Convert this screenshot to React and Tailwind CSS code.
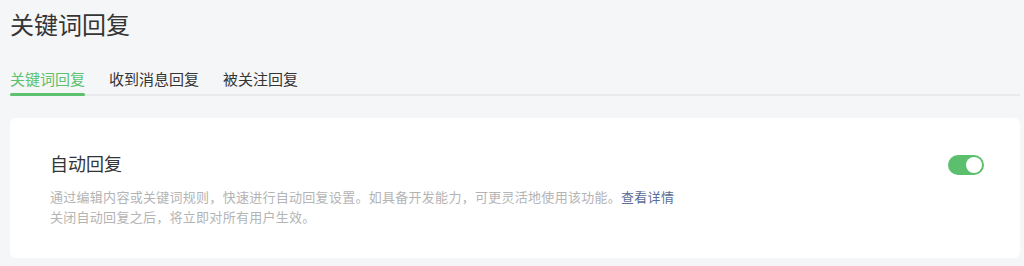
import React, { useState } from 'react';

export default function App() {
  const [tab, setTab] = useState('keyword');
  const [enabled, setEnabled] = useState(true);

  const tabs = [
    { id: 'keyword', label: '关键词回复' },
    { id: 'message', label: '收到消息回复' },
    { id: 'follow', label: '被关注回复' },
  ];

  return (
    <div
      className="min-h-screen bg-[#f5f6f7] pl-[10px] pr-[4px] pt-2 text-[#353535]"
      style={{ fontFamily: '"Noto Sans CJK SC", "Noto Sans", sans-serif' }}
    >
      {/* Page title */}
      <h1 className="text-[24px] leading-[32px] font-normal">关键词回复</h1>

      {/* Tabs */}
      <div className="mt-[28px] flex gap-6 border-b-2 border-[#e9eaec]">
        {tabs.map((t) => (
          <button
            key={t.id}
            onClick={() => setTab(t.id)}
            className={`relative pb-1 text-[15px] leading-[22px] ${
              tab === t.id ? 'text-[#5bc26f]' : 'text-[#353535]'
            }`}
          >
            {t.label}
            {tab === t.id && (
              <span className="absolute left-0 right-0 -bottom-[2px] h-[3px] bg-[#5bc26f] rounded-sm" />
            )}
          </button>
        ))}
      </div>

      {/* Auto reply card */}
      <div className="mt-[22px] flex items-start justify-between rounded-md bg-white pl-[40px] pr-[36px] pt-[32px] pb-[31px]">
        <div>
          <h2 className="text-[18px] leading-[26px] font-normal text-[#353535]">自动回复</h2>
          <div className="mt-[11px] text-[13px] leading-[20px] tracking-[0.28px] text-[#b4b4b4]">
            <p>
              通过编辑内容或关键词规则，快速进行自动回复设置。如具备开发能力，可更灵活地使用该功能。
              <a href="#" className="text-[#5a6d97]">查看详情</a>
            </p>
            <p>关闭自动回复之后，将立即对所有用户生效。</p>
          </div>
        </div>

        <button
          onClick={() => setEnabled(!enabled)}
          className={`mt-[5px] flex h-[20px] w-[36px] items-center rounded-full p-[2px] ${
            enabled ? 'justify-end bg-[#5bbf6e]' : 'justify-start bg-[#d9d9d9]'
          }`}
        >
          <span className="block h-[16px] w-[16px] rounded-full bg-white" />
        </button>
      </div>
    </div>
  );
}
